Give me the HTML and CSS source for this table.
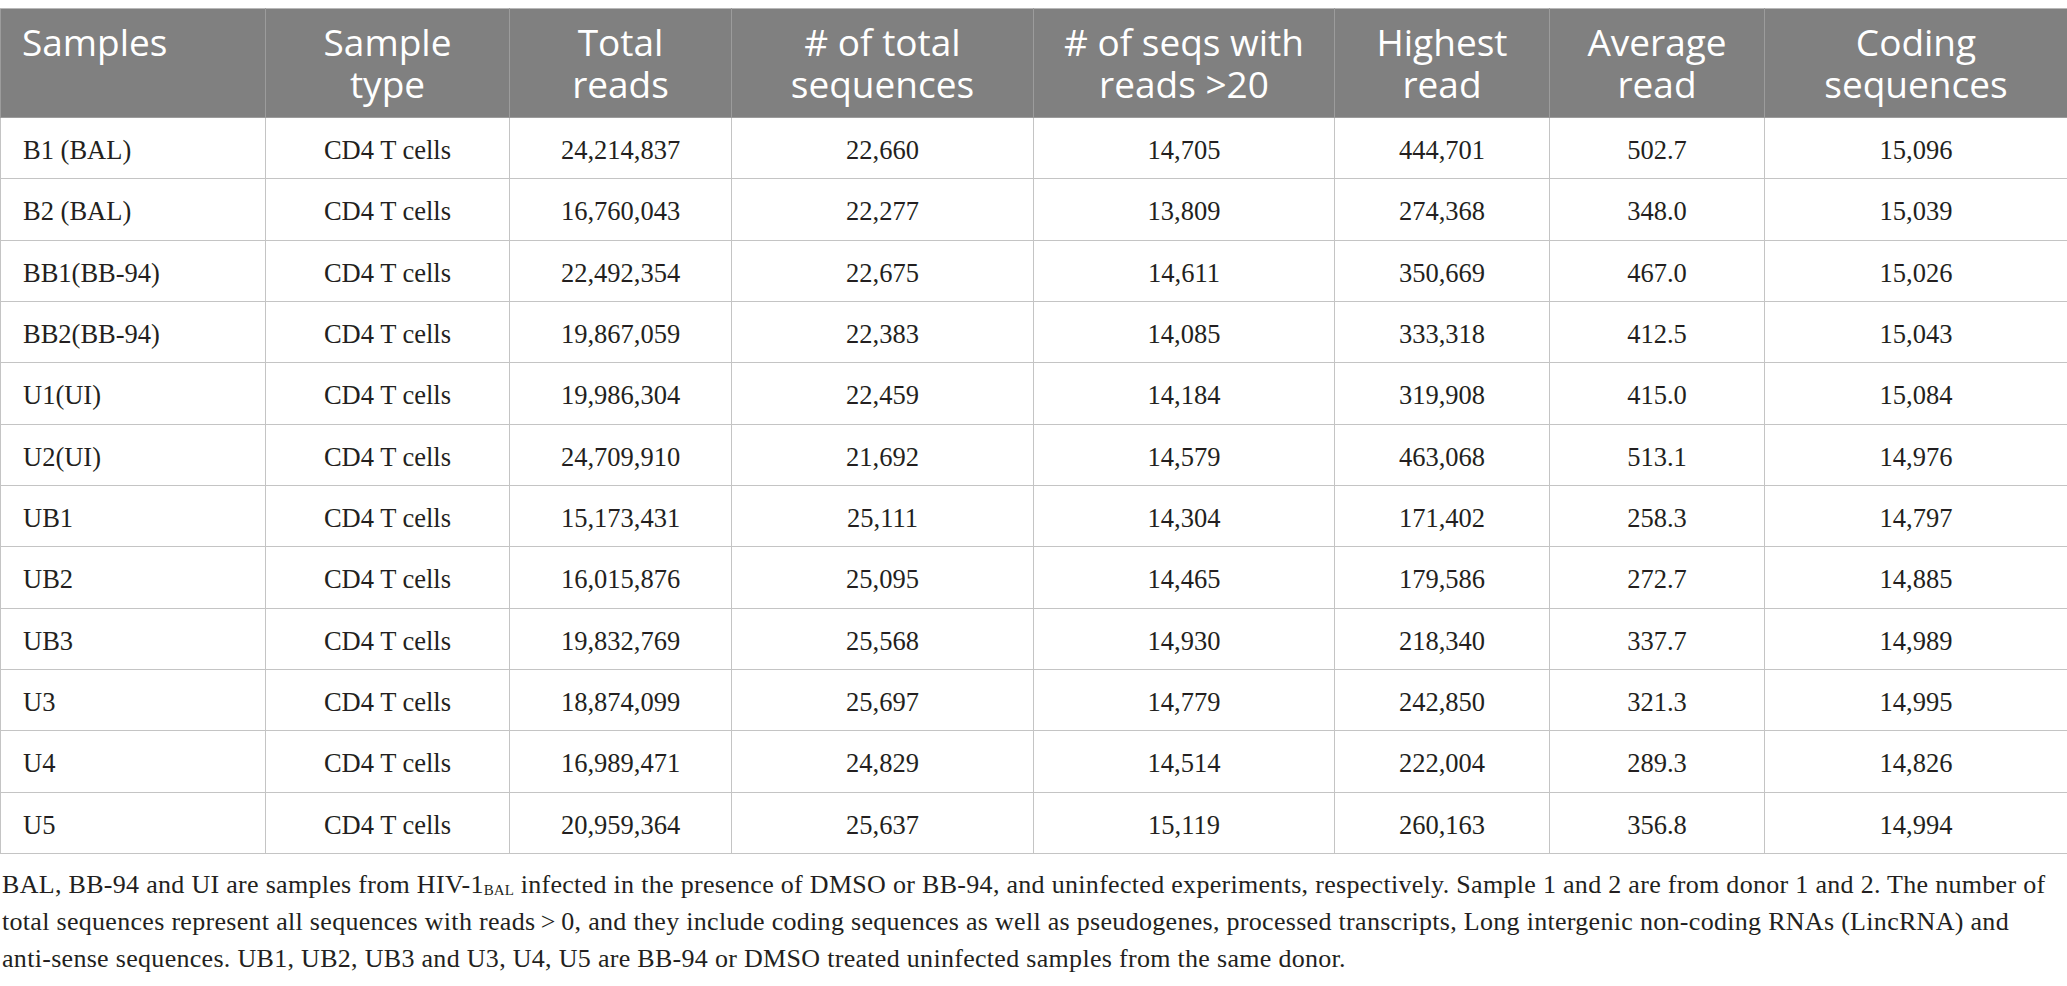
FILE: index.html
```html
<!DOCTYPE html>
<html>
<head>
<meta charset="utf-8">
<link rel="stylesheet" href="styles.css">
</head>
<body>
<div class="wrap">
<table class="data">
<colgroup>
<col class="c1"><col class="c2"><col class="c3"><col class="c4"><col class="c5"><col class="c6"><col class="c7"><col class="c8">
</colgroup>
<thead>
<tr>
<th class="first">Samples</th>
<th>Sample<br>type</th>
<th>Total<br>reads</th>
<th># of total<br>sequences</th>
<th># of seqs with<br>reads &gt;20</th>
<th>Highest<br>read</th>
<th>Average<br>read</th>
<th>Coding<br>sequences</th>
</tr>
</thead>
<tbody>
<tr><td class="first">B1 (BAL)</td><td>CD4 T cells</td><td>24,214,837</td><td>22,660</td><td>14,705</td><td>444,701</td><td>502.7</td><td>15,096</td></tr>
<tr><td class="first">B2 (BAL)</td><td>CD4 T cells</td><td>16,760,043</td><td>22,277</td><td>13,809</td><td>274,368</td><td>348.0</td><td>15,039</td></tr>
<tr><td class="first">BB1(BB-94)</td><td>CD4 T cells</td><td>22,492,354</td><td>22,675</td><td>14,611</td><td>350,669</td><td>467.0</td><td>15,026</td></tr>
<tr><td class="first">BB2(BB-94)</td><td>CD4 T cells</td><td>19,867,059</td><td>22,383</td><td>14,085</td><td>333,318</td><td>412.5</td><td>15,043</td></tr>
<tr><td class="first">U1(UI)</td><td>CD4 T cells</td><td>19,986,304</td><td>22,459</td><td>14,184</td><td>319,908</td><td>415.0</td><td>15,084</td></tr>
<tr><td class="first">U2(UI)</td><td>CD4 T cells</td><td>24,709,910</td><td>21,692</td><td>14,579</td><td>463,068</td><td>513.1</td><td>14,976</td></tr>
<tr><td class="first">UB1</td><td>CD4 T cells</td><td>15,173,431</td><td>25,111</td><td>14,304</td><td>171,402</td><td>258.3</td><td>14,797</td></tr>
<tr><td class="first">UB2</td><td>CD4 T cells</td><td>16,015,876</td><td>25,095</td><td>14,465</td><td>179,586</td><td>272.7</td><td>14,885</td></tr>
<tr><td class="first">UB3</td><td>CD4 T cells</td><td>19,832,769</td><td>25,568</td><td>14,930</td><td>218,340</td><td>337.7</td><td>14,989</td></tr>
<tr><td class="first">U3</td><td>CD4 T cells</td><td>18,874,099</td><td>25,697</td><td>14,779</td><td>242,850</td><td>321.3</td><td>14,995</td></tr>
<tr><td class="first">U4</td><td>CD4 T cells</td><td>16,989,471</td><td>24,829</td><td>14,514</td><td>222,004</td><td>289.3</td><td>14,826</td></tr>
<tr><td class="first">U5</td><td>CD4 T cells</td><td>20,959,364</td><td>25,637</td><td>15,119</td><td>260,163</td><td>356.8</td><td>14,994</td></tr>
</tbody>
</table>
<p class="note">BAL, BB-94 and UI are samples from HIV-1<sub>BAL</sub> infected in the presence of DMSO or BB-94, and uninfected experiments, respectively. Sample 1 and 2 are from donor 1 and 2. The number of total sequences represent all sequences with reads&#8201;&gt;&#8201;0, and they include coding sequences as well as pseudogenes, processed transcripts, Long intergenic non-coding RNAs (LincRNA) and <span class="nw">anti-sense</span> sequences. UB1, UB2, UB3 and U3, U4, U5 are BB-94 or DMSO treated uninfected samples from the same donor.</p>
</div>
</body>
</html>
```
FILE: styles.css
```css
html, body {
  margin: 0;
  padding: 0;
  background: #ffffff;
}
.wrap {
  padding-top: 8px;
  width: 2067px;
}
.data {
  border-collapse: collapse;
  table-layout: fixed;
  width: 2067px;
}
.c1 { width: 265px; }
.c2 { width: 244px; }
.c3 { width: 222px; }
.c4 { width: 302px; }
.c5 { width: 301px; }
.c6 { width: 215px; }
.c7 { width: 215px; }
.c8 { width: 303px; }
.data th {
  background: #808080;
  color: #ffffff;
  font-family: "Open Sans", "Noto Sans", sans-serif;
  font-weight: 400;
  font-size: 37px;
  line-height: 42px;
  height: 109px;
  box-sizing: border-box;
  padding: 12px 6px 0;
  vertical-align: top;
  text-align: center;
  border: 1px solid #9c9c9c;
  border-top-color: #b8b8b8;
}
.data th.first {
  text-align: left;
  padding-left: 21px;
}
.data td {
  font-family: "Liberation Serif", "Times New Roman", serif;
  font-size: 26.5px;
  color: #231f20;
  text-align: center;
  vertical-align: middle;
  height: 61.33px;
  box-sizing: border-box;
  padding: 5px 8px 0;
  border: 1px solid #c4c4c4;
}
.data td.first {
  text-align: left;
  padding-left: 22px;
}
.note {
  margin: 12px 0 0;
  padding-left: 2px;
  padding-right: 0;
  font-family: "Liberation Serif", "Times New Roman", serif;
  font-size: 26px;
  letter-spacing: 0.3px;
  line-height: 37px;
  color: #231f20;
}
.note .nw {
  white-space: nowrap;
}
.note sub {
  font-size: 15px;
  letter-spacing: 0;
  vertical-align: -2px;
  line-height: 0;
}
```
